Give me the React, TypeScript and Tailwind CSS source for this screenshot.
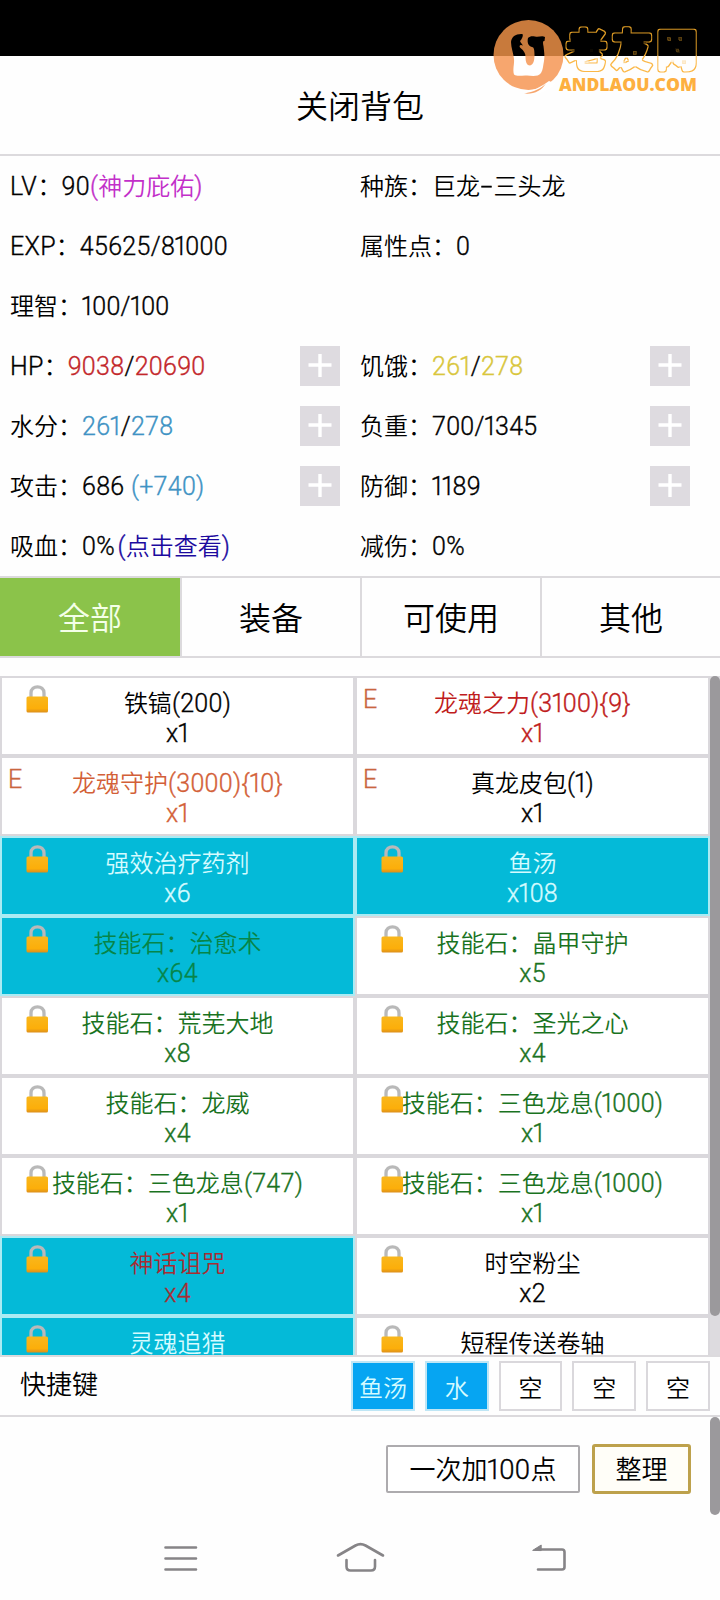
import React from "react";

const CJK = "font-['Noto_Sans_CJK_SC',sans-serif]";

/* Side-bearing corrections for single Latin glyphs. */
const KERN: Record<string, string> = {
  "1": "-ml-[1.6px] -mr-[2.3px]",
  "-": "inline-block scale-x-[1.7] ml-[3px] mr-[3px]",
  "%": "mr-[2.5px]",
  V: "mr-[0.5px]",
};

/* Splits a label into CJK and Latin runs so each gets its own face. */
function Txt({ children, big = false }: { children: string; big?: boolean }) {
  const runs = children.match(/[\x20-\x7e]+|[^\x20-\x7e]+/g) ?? [];
  return (
    <>
      {runs.map((r, i) =>
        /[\x20-\x7e]/.test(r[0]) ? (
          <span
            key={i}
            className={
              "whitespace-pre font-['Roboto',sans-serif] font-[350] tracking-[0.3px] [-webkit-text-stroke:0.35px_currentColor] " +
              (big ? "text-[27.5px]" : "text-[25px]")
            }
          >
            {r.split(/([1%V-])/).map((p, k) =>
              KERN[p] ? (
                <span key={k} className={KERN[p]}>
                  {p}
                </span>
              ) : (
                p
              )
            )}
          </span>
        ) : (
          <span key={i}>{r}</span>
        )
      )}
    </>
  );
}

type Part = [string, string?];

function Stat({ parts, plus }: { parts: Part[]; plus?: boolean }) {
  return (
    <div className="flex h-[60px] w-[350px] items-center justify-between pl-[10px] pr-[10px]">
      <div className="flex items-baseline whitespace-pre leading-[30px]">
        {parts.map(([t, c], i) => (
          <span key={i} className={c ?? "text-black"}>
            <Txt>{t}</Txt>
          </span>
        ))}
      </div>
      {plus && (
        <div className="flex size-10 items-center justify-center bg-[#dedbe0]">
          <svg width="24" height="24" viewBox="0 0 24 24" stroke="#fff" strokeWidth="3.4">
            <path d="M12 0v23M0.5 11h23" />
          </svg>
        </div>
      )}
    </div>
  );
}

const stats: { parts: Part[]; plus?: boolean }[] = [
  { parts: [["LV：90"], ["(神力庇佑)", "text-[#c22fc9]"]] },
  { parts: [["种族：巨龙-三头龙"]] },
  { parts: [["EXP：45625/81000"]] },
  { parts: [["属性点：0"]] },
  { parts: [["理智：100/100"]] },
  { parts: [] },
  { parts: [["HP："], ["9038", "text-[#c3272b]"], ["/"], ["20690", "text-[#c3272b]"]], plus: true },
  { parts: [["饥饿："], ["261", "text-[#d9c63c]"], ["/"], ["278", "text-[#d9c63c]"]], plus: true },
  { parts: [["水分："], ["261", "text-[#3f93c4]"], ["/"], ["278", "text-[#3f93c4]"]], plus: true },
  { parts: [["负重：700/1345"]], plus: true },
  { parts: [["攻击：686 "], ["(+740)", "text-[#3f93c4]"]], plus: true },
  { parts: [["防御：1189"]], plus: true },
  { parts: [["吸血：0%"], ["(点击查看)", "text-[#1c0a9e]"]] },
  { parts: [["减伤：0%"]] },
];

function Lock() {
  return (
    <svg className="absolute left-[23.5px] top-[6px]" width="24" height="30" viewBox="0 0 24 30">
      <defs>
        <linearGradient id="body" x1="0" y1="0" x2="0" y2="1">
          <stop offset="0" stopColor="#f9b71c" />
          <stop offset="0.75" stopColor="#fcae0a" />
          <stop offset="1" stopColor="#dc8f1c" />
        </linearGradient>
      </defs>
      <path d="M5 14V9C5 0.800 18 0.800 18 9V14" fill="none" stroke="#b9b9b9" strokeWidth="3.300" />
      <rect x="0.500" y="12.500" width="21.500" height="16" rx="1.500" fill="url(#body)" />
    </svg>
  );
}

type Item = { name: string; n: number; mark: "lock" | "E"; color?: string; on?: boolean };
const G = "text-[#1a731f]";
const items: Item[] = [
  { name: "铁镐(200)", n: 1, mark: "lock" },
  { name: "龙魂之力(3100){9}", n: 1, mark: "E", color: "text-[#c01c20]" },
  { name: "龙魂守护(3000){10}", n: 1, mark: "E", color: "text-[#d35f38]" },
  { name: "真龙皮包(1)", n: 1, mark: "E" },
  { name: "强效治疗药剂", n: 6, mark: "lock", color: "text-[#d5fbff]", on: true },
  { name: "鱼汤", n: 108, mark: "lock", color: "text-[#d5fbff]", on: true },
  { name: "技能石：治愈术", n: 64, mark: "lock", color: "text-[#078548]", on: true },
  { name: "技能石：晶甲守护", n: 5, mark: "lock", color: G },
  { name: "技能石：荒芜大地", n: 8, mark: "lock", color: G },
  { name: "技能石：圣光之心", n: 4, mark: "lock", color: G },
  { name: "技能石：龙威", n: 4, mark: "lock", color: G },
  { name: "技能石：三色龙息(1000)", n: 1, mark: "lock", color: G },
  { name: "技能石：三色龙息(747)", n: 1, mark: "lock", color: G },
  { name: "技能石：三色龙息(1000)", n: 1, mark: "lock", color: G },
  { name: "神话诅咒", n: 4, mark: "lock", color: "text-[#a82c32]", on: true },
  { name: "时空粉尘", n: 2, mark: "lock" },
  { name: "灵魂追猎", n: 1, mark: "lock", color: "text-[#d5fbff]", on: true },
  { name: "短程传送卷轴", n: 1, mark: "lock" },
];

function Cell({ it }: { it: Item }) {
  return (
    <div
      className={
        "relative h-20 border-2 pt-[9px] text-center leading-[30px] " +
        (it.on ? "border-[#abebf3] bg-[#04bad8] " : "border-[#dad8dc] bg-white ") +
        (it.color ?? "text-black")
      }
    >
      {it.mark === "lock" ? (
        <Lock />
      ) : (
        <span className="absolute left-[6px] top-[5px] text-[#c9663f]">
          <Txt>E</Txt>
        </span>
      )}
      <div className="relative h-[30px] whitespace-nowrap"><Txt>{it.name}</Txt></div>
      <div className="h-[30px]"><Txt>{"x" + it.n}</Txt></div>
    </div>
  );
}

function Logo() {
  return (
    <svg className="absolute left-[490px] top-[14px]" width="212" height="84" viewBox="490 14 212 84">
      <defs>
        <linearGradient id="ink" gradientUnits="userSpaceOnUse" x1="0" y1="0" x2="0" y2="112">
          <stop offset="0.5" stopColor="#000" />
          <stop offset="0.5" stopColor="#fff" />
        </linearGradient>
        <linearGradient id="disc" gradientUnits="userSpaceOnUse" x1="0" y1="0" x2="0" y2="112">
          <stop offset="0.5" stopColor="#c87a3c" />
          <stop offset="0.5" stopColor="#f7a66e" />
        </linearGradient>
        <linearGradient id="line" gradientUnits="userSpaceOnUse" x1="0" y1="0" x2="0" y2="106">
          <stop offset="0.5" stopColor="#dc9a24" />
          <stop offset="0.5" stopColor="#fbb848" />
        </linearGradient>
        <filter id="ring" filterUnits="userSpaceOnUse" x="555" y="14" width="147" height="70" colorInterpolationFilters="sRGB">
          <feMorphology in="SourceAlpha" operator="erode" radius="1" result="core" />
          <feComposite in="SourceGraphic" in2="core" operator="out" />
        </filter>
      </defs>
      <circle cx="528.500" cy="55" r="35" fill="url(#disc)" />
      <path d="M520 91.500C532 92 541 87 549 81L556 84C547 92 535 96.500 523 93.500C531 93.500 538 91 544 87C537 90.500 529 92.500 520 91.500Z" fill="#fff" />
      <path d="M524 93.500C534 92 541 88.500 546 83.500C541 91 534 94.500 524 93.500Z" fill="#f7a66e" />
      <path
        d="M511 42C511.500 36.500 516 33.500 522.500 34C523.500 36 522 38 521 40C519 41 521 42.500 523 45.500C520 44 518.500 46 520.500 48C524 51 525.500 53 525.500 57C525.500 62 527 65.500 530 65.500C533.500 65 534.500 60 534.500 55C534.500 50 534 47 532 47C528 46 527 42 528 38C530 36 532 36 535 36.500C539 37.500 542 35 545 37L544.500 41C542.500 41 543 43 543.500 46C544 51 545 56 544 61C543 66 543 70 541 73C538 77 532 76 527 75.500C522 75 518 77 514 74.500C512.500 69 514.500 64 514 59C513.500 53 511 48 511 42Z"
        fill="url(#ink)"
      />
      <g filter="url(#ring)">
        <text
          x="566 611.500 656.500"
          y="63.500"
          transform="translate(0 -1.600) scale(1 1.060)"
          className="font-['Noto_Sans_CJK_SC',sans-serif] font-bold"
          fontSize="41"
          strokeLinejoin="round"
          fill="url(#line)"
          stroke="url(#line)"
          strokeWidth="4.600"
        >
          老友网
        </text>
      </g>
      <text
        x="559"
        y="91"
        textLength="138"
        lengthAdjust="spacingAndGlyphs"
        className="font-['Open_Sans',sans-serif] font-extrabold"
        fontSize="18"
        fill="#fdb040"
      >
        ANDLAOU.COM
      </text>
    </svg>
  );
}

export default function App() {
  return (
    <div className={"relative flex h-[1600px] w-[720px] flex-col overflow-hidden bg-[#fefefe] text-[24px] font-[350] text-black " + CJK}>
      <div className="h-14 shrink-0 bg-black" />
      <header className="flex h-[100px] shrink-0 items-center justify-center border-b-2 border-[#dcdadd] pb-[2px] text-[32px] leading-none">
        关闭背包
      </header>

      <section className="grid h-[420px] shrink-0 grid-cols-[350px_350px]">
        {stats.map((s, i) => (
          <Stat key={i} {...s} />
        ))}
      </section>

      <nav className="grid h-[82px] shrink-0 grid-cols-4 border-y-2 border-[#dcdadd] text-[32px]">
        <div className="flex items-center justify-center bg-[#8bc34a] pb-[2px] text-[#f4ffe8]">全部</div>
        <div className="flex items-center justify-center border-l-2 border-[#dcdadd] pb-[2px]">装备</div>
        <div className="flex items-center justify-center border-l-2 border-[#dcdadd] pb-[2px]">可使用</div>
        <div className="flex items-center justify-center border-l-2 border-[#dcdadd] pb-[2px]">其他</div>
      </nav>

      <section className="mt-[18px] flex h-[679px] shrink-0 overflow-hidden">
        <div className="grid w-[710px] auto-rows-[80px] grid-cols-2">
          {items.map((it, i) => (
            <Cell key={i} it={it} />
          ))}
        </div>
        <div className="w-[10px] bg-[#dddbdf]">
          <div className="h-[640px] rounded-[5px] bg-[#9b999c]" />
        </div>
      </section>

      <section className="flex h-[62px] shrink-0 items-start justify-between border-y-2 border-[#dcdadd] pl-5 pr-[10px] pt-1">
        <div className="pt-[3px] text-[26px] leading-[38px]">快捷键</div>
        <div className="flex gap-[10px]">
          {["鱼汤", "水", "空", "空", "空"].map((t, i) => (
            <div
              key={i}
              className={
                "flex h-[50px] w-[63.8px] items-center justify-center border-2 pt-[1px] " +
                (i < 2 ? "border-[#bfe6f5] bg-[#06a5f2] text-[#d5fbff]" : "border-[#dad8dc] bg-white")
              }
            >
              {t}
            </div>
          ))}
        </div>
      </section>

      <section className="flex h-[98px] shrink-0">
        <div className="flex flex-1 items-center justify-end gap-3 pb-[2px] pr-[19px] pt-[8px] text-[26px]">
          <button className="flex h-12 w-[194px] items-center justify-center rounded-[2px] border-2 border-[#adabae] bg-white">
            <span><Txt big>一次加100点</Txt></span>
          </button>
          <button className="flex h-[50px] w-[99px] items-center justify-center rounded-[3px] border-[3px] border-[#bda14c] bg-[#fffef8] pb-[3px]">
            整理
          </button>
        </div>
        <div className="w-[10px] rounded-[5px] bg-[#9b999c]" />
      </section>

      <footer className="h-[85px] shrink-0">
        <svg width="720" height="85" viewBox="0 1515 720 85" fill="none" stroke="#868487" strokeWidth="2.600" strokeLinecap="round" strokeLinejoin="round">
          <path d="M165.500 1547.500H196M165.500 1558.500H196M165.500 1569.500H196" />
          <path d="M338 1555.500L355.500 1545.500Q360.500 1542.800 365.500 1545.500L383 1555.500M346.500 1560V1566.500Q346.500 1570.500 350.500 1570.500H371Q375 1570.500 375 1566.500V1560" />
          <path d="M538 1569.500H562Q564.500 1569.500 564.500 1567V1552Q564.500 1549.500 562 1549.500H536" />
          <path d="M533 1550.200L541.200 1545V1550.200Z" fill="#868487" strokeWidth="1" />
        </svg>
      </footer>
      <Logo />
    </div>
  );
}
